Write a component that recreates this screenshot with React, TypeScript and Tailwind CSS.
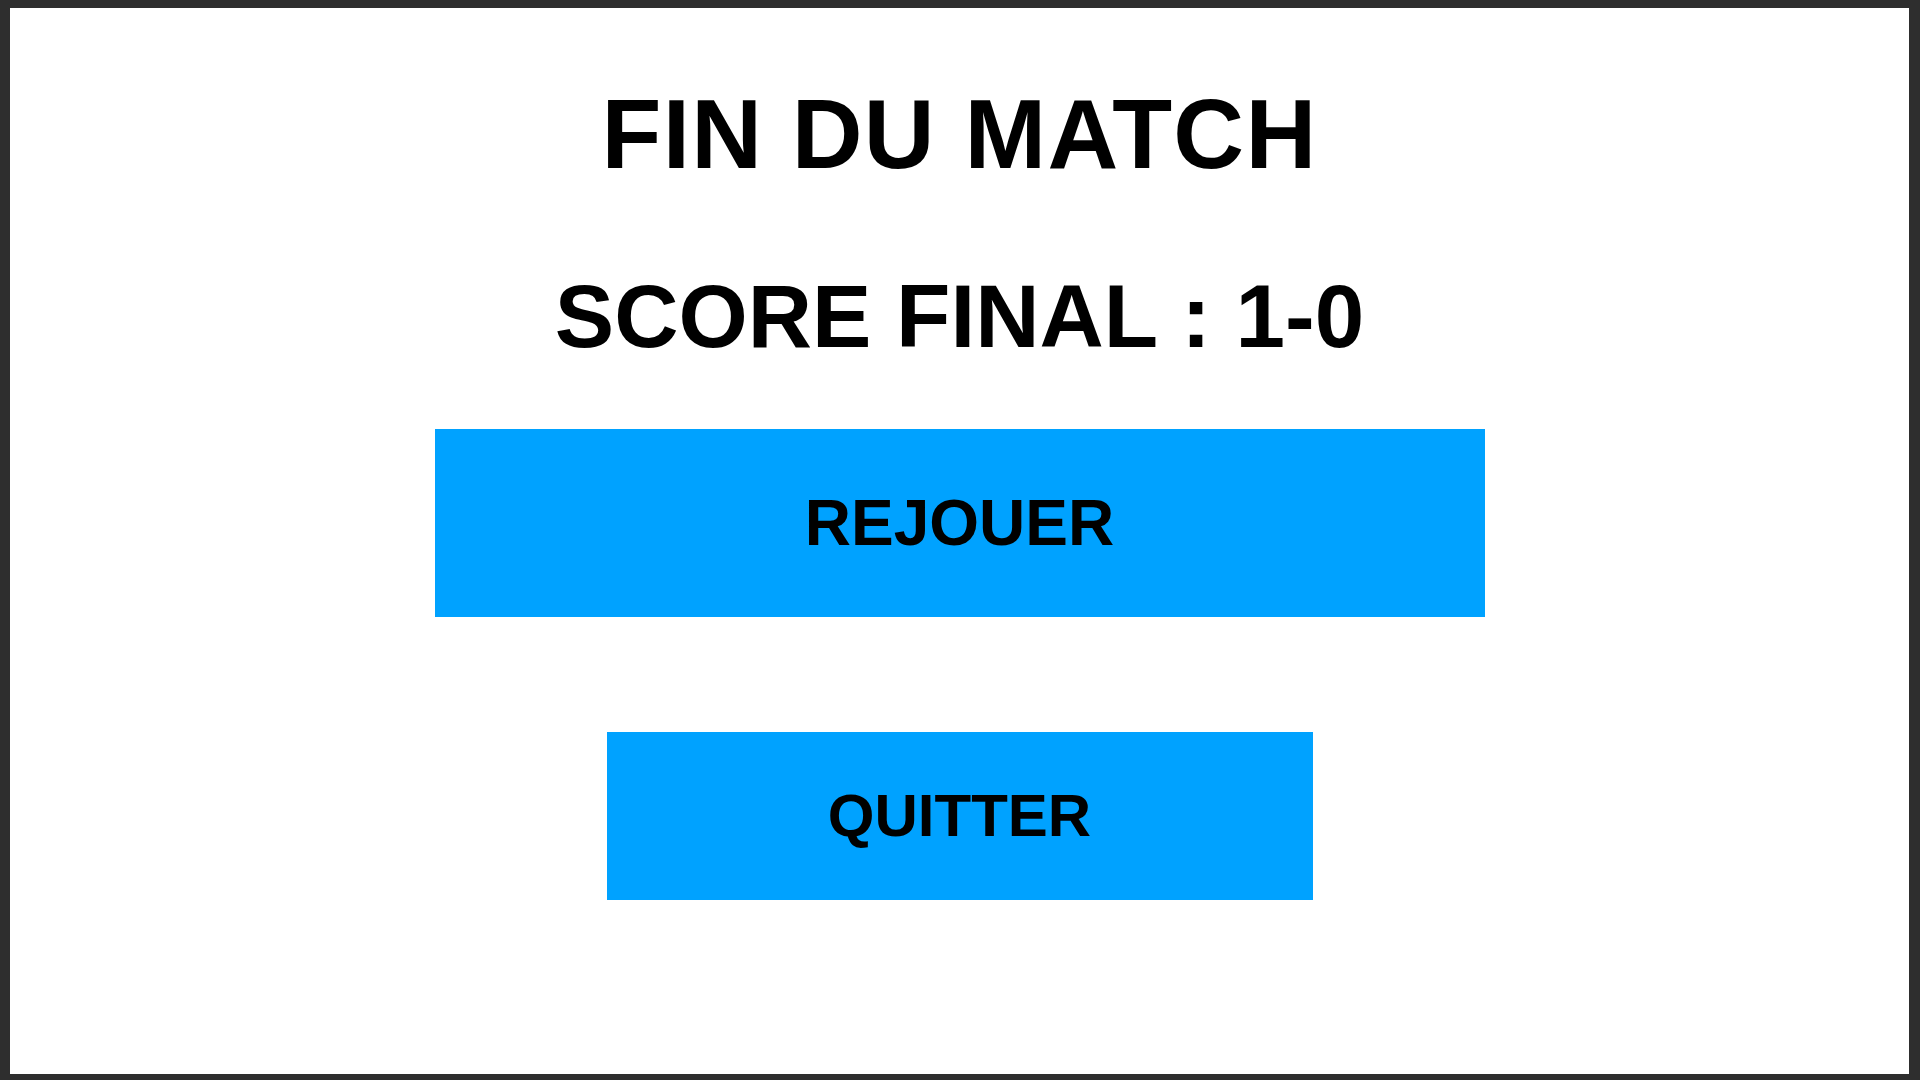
import React from 'react';

const App: React.FC = () => {
  const handleReplay = () => {};
  const handleQuit = () => {};

  return (
    <div className="h-screen w-full bg-[#2e2e2e] pt-[8px] pl-[10px] pr-[11px] pb-[6px]">
      <div
        className="flex h-full w-full flex-col items-center bg-white text-black"
        style={{ fontFamily: '"Liberation Sans", Arial, sans-serif' }}
      >
        {/* Title */}
        <h1 className="mt-[77px] text-[98px] font-bold leading-none tracking-[1.3px]">FIN DU MATCH</h1>

        {/* Score */}
        <h2 className="mt-[89px] text-[89px] font-bold leading-none">SCORE FINAL : 1-0</h2>

        {/* Actions */}
        <button
          onClick={handleReplay}
          className="mt-[68px] flex h-[188px] w-[1050px] items-center justify-center bg-[#00a2ff] text-[64px] font-bold leading-none text-black"
        >
          REJOUER
        </button>

        <button
          onClick={handleQuit}
          className="mt-[115px] flex h-[168px] w-[706px] items-center justify-center bg-[#00a2ff] text-[60px] font-bold leading-none text-black"
        >
          QUITTER
        </button>
      </div>
    </div>
  );
};

export default App;
